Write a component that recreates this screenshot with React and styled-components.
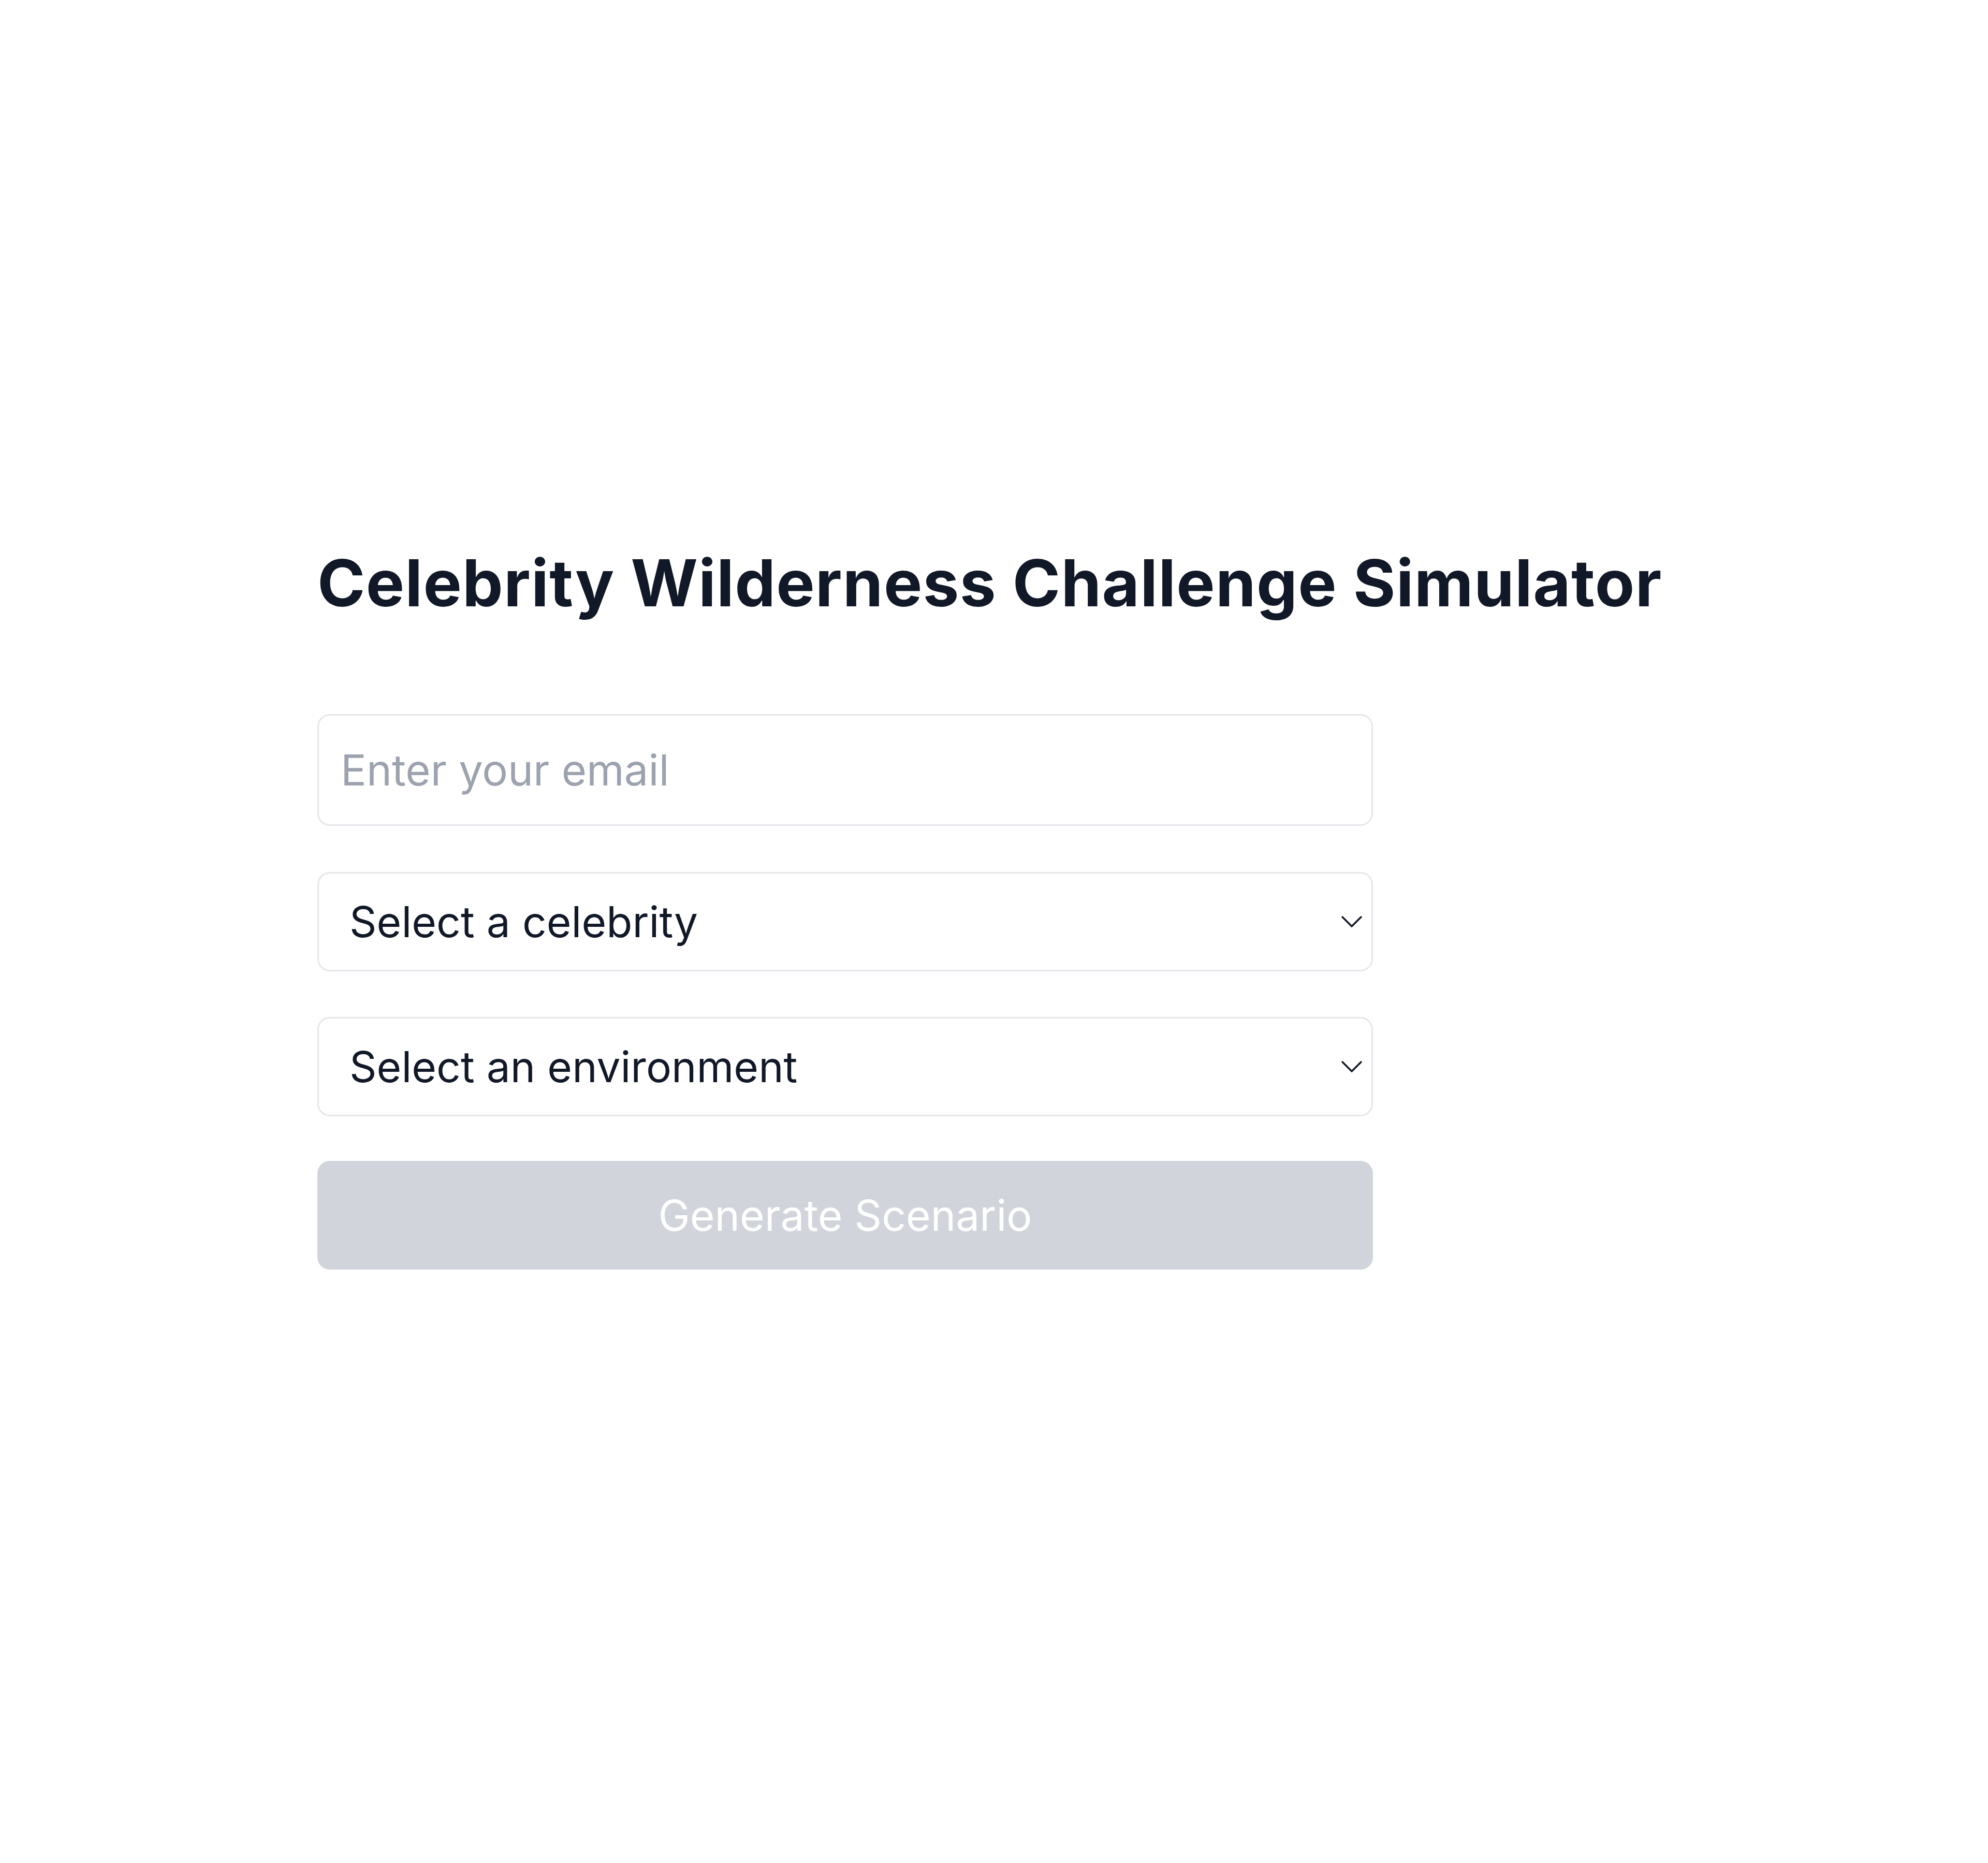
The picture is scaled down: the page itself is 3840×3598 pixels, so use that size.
import React from "react";
import styled, { createGlobalStyle } from "styled-components";

const GlobalStyle = createGlobalStyle`
  html, body {
    margin: 0;
    padding: 0;
    background: #ffffff;
  }
  body {
    font-family: Inter, "Noto Sans", "Liberation Sans", sans-serif;
    color: #111827;
  }
  * { box-sizing: border-box; }
`;

const Page = styled.main`
  min-height: 3598px;
  padding-top: 1063px;
`;

const Container = styled.div`
  width: 2614px;
  margin: 0 auto;
`;

const Title = styled.h1`
  margin: 0;
  font-size: 125px;
  line-height: 1;
  font-weight: 700;
  letter-spacing: 1.2px;
  color: #111827;
  white-space: nowrap;
`;

const Form = styled.form`
  margin-top: 191px;
  width: 2039px;
  display: flex;
  flex-direction: column;
`;

const Field = styled.div`
  position: relative;
  margin-top: ${(p) => p.$gap || 0}px;
`;

const TextInput = styled.input`
  display: block;
  width: 100%;
  height: 216px;
  padding: 0 42px;
  border: 3px solid #e5e7eb;
  border-radius: 24px;
  background: #ffffff;
  font-family: inherit;
  font-size: 83px;
  color: #111827;
  outline: none;
  &::placeholder {
    color: #9ca3af;
  }
`;

const Select = styled.select`
  display: block;
  width: 100%;
  height: 192px;
  padding: 0 100px 0 59px;
  border: 3px solid #e5e7eb;
  border-radius: 24px;
  background: #ffffff;
  font-family: inherit;
  font-size: 82px;
  color: #111827;
  appearance: none;
  -webkit-appearance: none;
  outline: none;
`;

const Chevron = styled.svg`
  position: absolute;
  right: 20px;
  top: 50%;
  transform: translateY(-50%);
  pointer-events: none;
`;

const Button = styled.button`
  margin-top: ${(p) => p.$gap || 0}px;
  height: 210px;
  width: 100%;
  border: none;
  border-radius: 24px;
  background: #d1d5db;
  color: #ffffff;
  font-family: inherit;
  font-size: 82px;
  cursor: not-allowed;
`;

const ChevronIcon = () => (
  <Chevron width="42" height="24" viewBox="0 0 42 24" fill="none">
    <polyline
      points="3,3 21,21 39,3"
      stroke="#111827"
      strokeWidth="3.5"
      strokeLinecap="round"
      strokeLinejoin="round"
    />
  </Chevron>
);

export default function App() {
  return (
    <>
      <GlobalStyle />
      <Page>
        <Container>
          <Title>Celebrity Wilderness Challenge Simulator</Title>
          <Form onSubmit={(e) => e.preventDefault()}>
            <Field>
              <TextInput type="email" placeholder="Enter your email" />
            </Field>
            <Field $gap={89}>
              <Select defaultValue="">
                <option value="">Select a celebrity</option>
              </Select>
              <ChevronIcon />
            </Field>
            <Field $gap={88}>
              <Select defaultValue="">
                <option value="">Select an environment</option>
              </Select>
              <ChevronIcon />
            </Field>
            <Button type="submit" disabled $gap={86}>
              Generate Scenario
            </Button>
          </Form>
        </Container>
      </Page>
    </>
  );
}
